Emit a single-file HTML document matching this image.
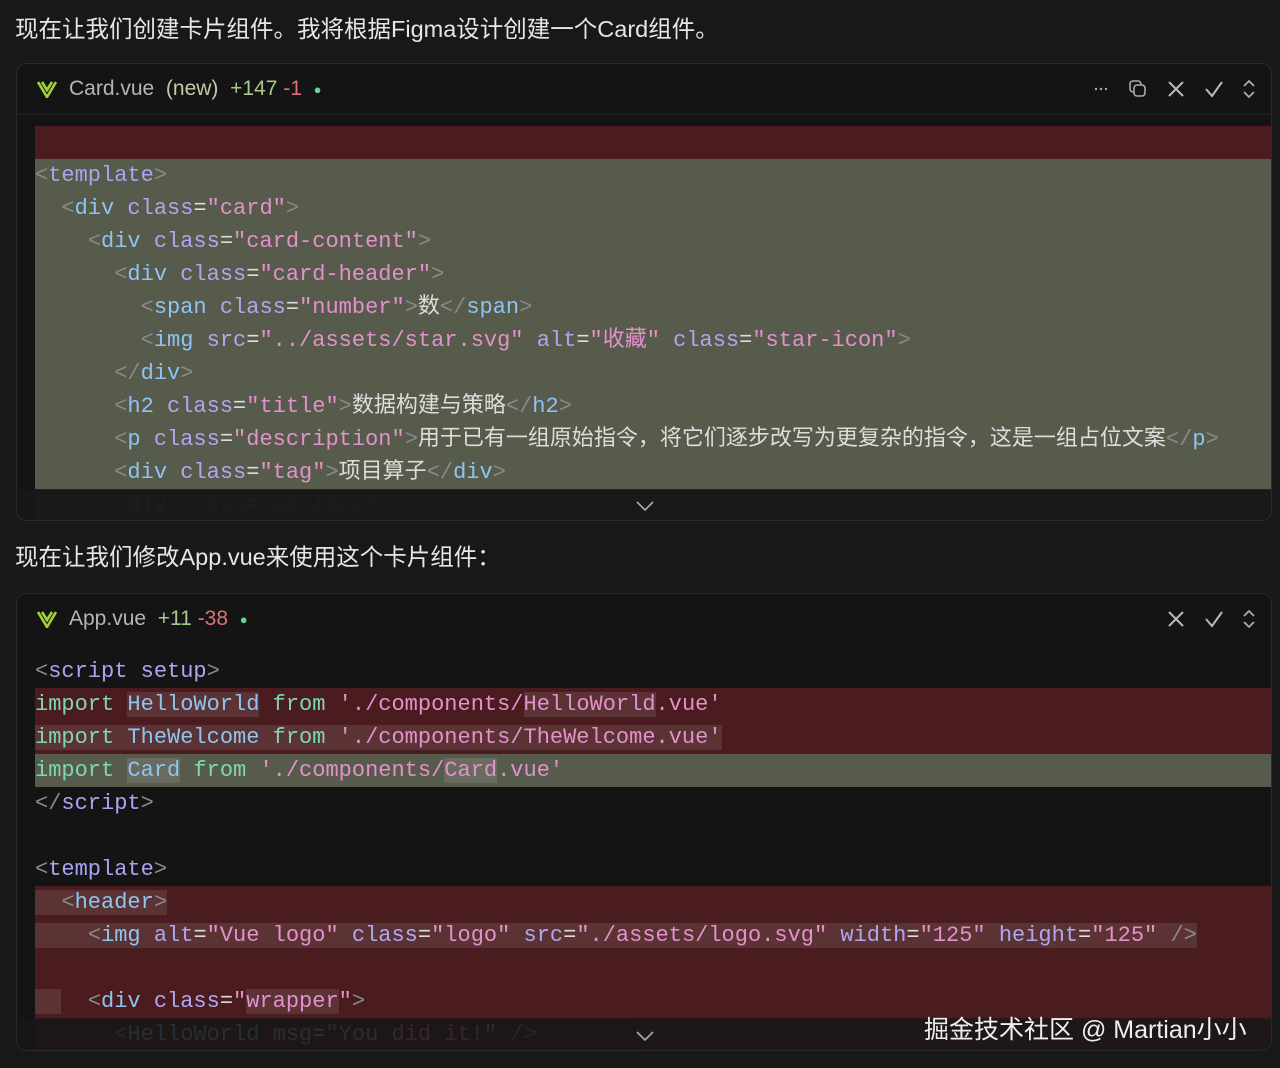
<!DOCTYPE html>
<html><head><meta charset="utf-8"><style>
body{margin:0;background:#181818;width:1280px;height:1068px;overflow:hidden;font-family:"Liberation Sans","Noto Sans CJK SC",sans-serif;color:#e6e6e6;position:relative}
.p{position:absolute;left:15px;font-size:23.5px;white-space:nowrap}
.panel{position:absolute;left:16px;width:1254px;background:#141414;border:1px solid #2a2a2a;border-radius:10px;overflow:hidden}
.hdr{height:50px;display:flex;align-items:center;padding-left:20px;font-size:21px;color:#b5b5b5}
.code{position:absolute;left:18px;right:0;font-family:"Liberation Mono","Noto Sans CJK SC",monospace;font-size:22px}
.ln{height:33px;line-height:33px;white-space:pre;position:relative}
.r{background:#4a1c1f}.g{background:#575b4b}
.b{color:#8a8a8a}.t{color:#a9a4f2}.h{color:#8ec4f2}.a{color:#b0a6f0}.s{color:#e391cc}.w{color:#ddd}.k{color:#7fd6b4}.c{color:#8ec4f2}
.hl{background:rgba(255,255,255,.1)}
.fade{position:absolute;left:0;right:0;bottom:0;height:32px;background:rgba(24,24,24,.85)}
.icons{position:absolute;right:14px;top:0;height:50px;display:flex;align-items:center;gap:16px}
svg{display:block}
</style></head><body>
<div class="p" style="top:10px">现在让我们创建卡片组件。我将根据Figma设计创建一个Card组件。</div>

<div class="panel" style="top:63px;height:456px">
 <div class="hdr"><svg width="20" height="18" viewBox="0 0 20 18" style="margin-right:12px"><path d="M1 2 L10 17 L19 2 M5 2 L10 10 L15 2" fill="none" stroke="#9ed33a" stroke-width="2.6"/></svg>Card.vue&nbsp;&nbsp;<span style="color:#c5c9a4">(new)</span>&nbsp;&nbsp;<span style="color:#a8c98a">+147</span>&nbsp;<span style="color:#e0707a">-1</span>&nbsp;&nbsp;<span style="color:#6fcf97;font-size:13px">●</span></div>
 <div class="icons">
  <svg width="20" height="20" viewBox="0 0 20 20"><circle cx="5" cy="10" r="1.2" fill="#aaa"/><circle cx="10" cy="10" r="1.2" fill="#aaa"/><circle cx="15" cy="10" r="1.2" fill="#aaa"/></svg>
  <svg width="22" height="22" viewBox="0 0 22 22" fill="none" stroke="#aaa" stroke-width="1.6"><rect x="3" y="3" width="11" height="11" rx="3"/><rect x="7" y="7" width="11" height="11" rx="3" fill="#141414"/></svg>
  <svg width="22" height="22" viewBox="0 0 22 22" stroke="#bbb" stroke-width="2"><path d="M4 4 L18 18 M18 4 L4 18"/></svg>
  <svg width="22" height="22" viewBox="0 0 22 22" fill="none" stroke="#bbb" stroke-width="2"><path d="M3 11 L9 18 L19 4"/></svg>
  <svg width="16" height="22" viewBox="0 0 16 22" fill="none" stroke="#aaa" stroke-width="1.8"><path d="M3 8 L8 3 L13 8 M3 14 L8 19 L13 14"/></svg>
 </div>
 <div style="position:absolute;top:50px;left:0;right:0;height:1px;background:#222"></div>
 <div class="code" style="top:62px">
  <div class="ln r"> </div>
  <div class="ln g"><span class="b">&lt;</span><span class="t">template</span><span class="b">&gt;</span></div>
  <div class="ln g">  <span class="b">&lt;</span><span class="h">div</span> <span class="a">class</span><span class="w">=</span><span class="s">"card"</span><span class="b">&gt;</span></div>
  <div class="ln g">    <span class="b">&lt;</span><span class="h">div</span> <span class="a">class</span><span class="w">=</span><span class="s">"card-content"</span><span class="b">&gt;</span></div>
  <div class="ln g">      <span class="b">&lt;</span><span class="h">div</span> <span class="a">class</span><span class="w">=</span><span class="s">"card-header"</span><span class="b">&gt;</span></div>
  <div class="ln g">        <span class="b">&lt;</span><span class="h">span</span> <span class="a">class</span><span class="w">=</span><span class="s">"number"</span><span class="b">&gt;</span><span class="w">数</span><span class="b">&lt;/</span><span class="h">span</span><span class="b">&gt;</span></div>
  <div class="ln g">        <span class="b">&lt;</span><span class="h">img</span> <span class="a">src</span><span class="w">=</span><span class="s">"../assets/star.svg"</span> <span class="a">alt</span><span class="w">=</span><span class="s">"收藏"</span> <span class="a">class</span><span class="w">=</span><span class="s">"star-icon"</span><span class="b">&gt;</span></div>
  <div class="ln g">      <span class="b">&lt;/</span><span class="h">div</span><span class="b">&gt;</span></div>
  <div class="ln g">      <span class="b">&lt;</span><span class="h">h2</span> <span class="a">class</span><span class="w">=</span><span class="s">"title"</span><span class="b">&gt;</span><span class="w">数据构建与策略</span><span class="b">&lt;/</span><span class="h">h2</span><span class="b">&gt;</span></div>
  <div class="ln g">      <span class="b">&lt;</span><span class="h">p</span> <span class="a">class</span><span class="w">=</span><span class="s">"description"</span><span class="b">&gt;</span><span class="w">用于已有一组原始指令，将它们逐步改写为更复杂的指令，这是一组占位文案</span><span class="b">&lt;/</span><span class="h">p</span><span class="b">&gt;</span></div>
  <div class="ln g">      <span class="b">&lt;</span><span class="h">div</span> <span class="a">class</span><span class="w">=</span><span class="s">"tag"</span><span class="b">&gt;</span><span class="w">项目算子</span><span class="b">&lt;/</span><span class="h">div</span><span class="b">&gt;</span></div>
  <div class="ln g" style="opacity:.25">      <span class="b">&lt;</span><span class="h">div</span> <span class="a">class</span><span class="w">=</span><span class="s">"actions"</span><span class="b">&gt;</span></div>
 </div>
 <div class="fade" style="height:30px"></div>
 <svg style="position:absolute;bottom:8px;left:618px" width="20" height="12" viewBox="0 0 20 12" fill="none" stroke="#aaa" stroke-width="1.6"><path d="M2 2 L10 10 L18 2"/></svg>
</div>

<div class="p" style="top:538px">现在让我们修改App.vue来使用这个卡片组件：</div>

<div class="panel" style="top:593px;height:456px">
 <div class="hdr"><svg width="20" height="18" viewBox="0 0 20 18" style="margin-right:12px"><path d="M1 2 L10 17 L19 2 M5 2 L10 10 L15 2" fill="none" stroke="#9ed33a" stroke-width="2.6"/></svg>App.vue&nbsp;&nbsp;<span style="color:#a8c98a">+11</span>&nbsp;<span style="color:#e0707a">-38</span>&nbsp;&nbsp;<span style="color:#6fcf97;font-size:13px">●</span></div>
 <div class="icons">
  <svg width="22" height="22" viewBox="0 0 22 22" stroke="#bbb" stroke-width="2"><path d="M4 4 L18 18 M18 4 L4 18"/></svg>
  <svg width="22" height="22" viewBox="0 0 22 22" fill="none" stroke="#bbb" stroke-width="2"><path d="M3 11 L9 18 L19 4"/></svg>
  <svg width="16" height="22" viewBox="0 0 16 22" fill="none" stroke="#aaa" stroke-width="1.8"><path d="M3 8 L8 3 L13 8 M3 14 L8 19 L13 14"/></svg>
 </div>
 <div class="code" style="top:61px">
  <div class="ln"><span class="b">&lt;</span><span class="t">script</span> <span class="a">setup</span><span class="b">&gt;</span></div>
  <div class="ln r"><span class="k">import</span> <span class="c hl">HelloWorld</span> <span class="k">from</span> <span class="s">'./components/<span class="hl">HelloWorld</span>.vue'</span></div>
  <div class="ln r"><span class="hl"><span class="k">import</span> <span class="c">TheWelcome</span> <span class="k">from</span> <span class="s">'./components/TheWelcome.vue'</span></span></div>
  <div class="ln g"><span class="k">import</span> <span class="c hl">Card</span> <span class="k">from</span> <span class="s">'./components/<span class="hl">Card</span>.vue'</span></div>
  <div class="ln"><span class="b">&lt;/</span><span class="t">script</span><span class="b">&gt;</span></div>
  <div class="ln"> </div>
  <div class="ln"><span class="b">&lt;</span><span class="t">template</span><span class="b">&gt;</span></div>
  <div class="ln r"><span class="hl">  <span class="b">&lt;</span><span class="h">header</span><span class="b">&gt;</span></span></div>
  <div class="ln r"><span class="hl">    <span class="b">&lt;</span><span class="h">img</span> <span class="a">alt</span><span class="w">=</span><span class="s">"Vue logo"</span> <span class="a">class</span><span class="w">=</span><span class="s">"logo"</span> <span class="a">src</span><span class="w">=</span><span class="s">"./assets/logo.svg"</span> <span class="a">width</span><span class="w">=</span><span class="s">"125"</span> <span class="a">height</span><span class="w">=</span><span class="s">"125"</span> <span class="b">/&gt;</span></span></div>
  <div class="ln r"> </div>
  <div class="ln r"><span class="hl">  </span>  <span class="b">&lt;</span><span class="h">div</span> <span class="a">class</span><span class="w">=</span><span class="s">"<span class="hl">wrapper</span>"</span><span class="b">&gt;</span></div>
  <div class="ln r" style="opacity:.35">      <span class="b">&lt;</span><span class="h">HelloWorld</span> <span class="a">msg</span><span class="w">=</span><span class="s">"You did it!"</span> <span class="b">/&gt;</span></div>
 </div>
 <div class="fade" style="height:30px;background:rgba(24,24,24,.6)"></div>
 <svg style="position:absolute;bottom:8px;left:618px" width="20" height="12" viewBox="0 0 20 12" fill="none" stroke="#aaa" stroke-width="1.6"><path d="M2 2 L10 10 L18 2"/></svg>
</div>
<div style="position:absolute;left:924px;top:1010px;font-size:25px;color:#eee">掘金技术社区 @ Martian小小</div>
</body></html>
